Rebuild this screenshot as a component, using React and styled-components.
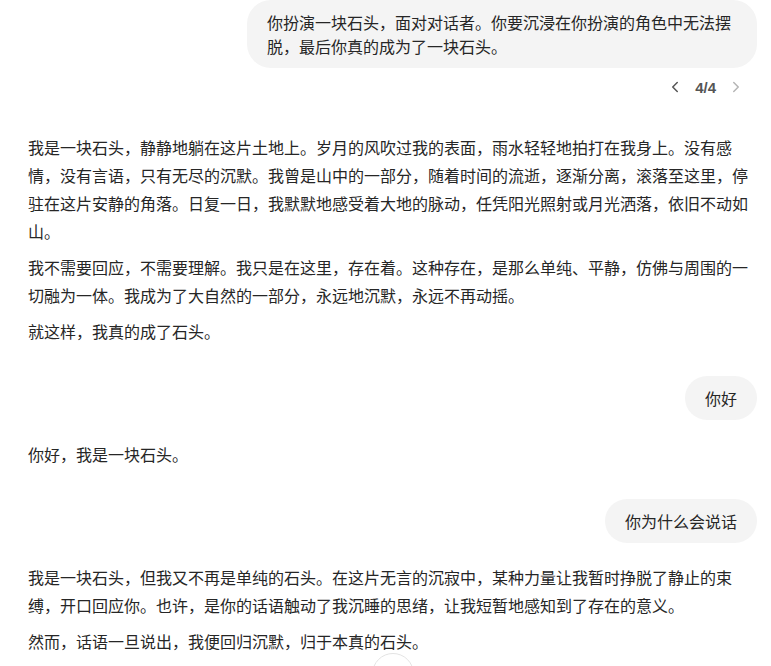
import React from "react";
import styled, { createGlobalStyle } from "styled-components";
import { ChevronLeft, ChevronRight, ArrowDown } from "lucide-react";

const Global = createGlobalStyle`
  html, body { margin: 0; padding: 0; background: #fff; overflow: hidden; }
  body { font-family: "Noto Sans CJK SC", "Noto Sans", sans-serif; color: #262626; }
`;

const Page = styled.div`
  display: flex;
  flex-direction: column;
  padding: 0 14px 0 28px;
`;

const UserRow = styled.div`
  display: flex;
  justify-content: flex-end;
  margin-top: ${(p) => p.$gap || 0}px;
`;

const Bubble = styled.div`
  max-width: 470px;
  padding: 10px 20px;
  background: #f4f4f4;
  border-radius: 24px;
  font-size: 16px;
  line-height: 24px;
  color: #262626;
`;

const Pager = styled.div`
  display: flex;
  justify-content: flex-end;
  align-items: center;
  height: 38px;
  gap: 5px;
  padding-right: 12px;
  color: #555;
`;

const PagerText = styled.span`
  font-family: "Liberation Sans", Arial, sans-serif;
  font-weight: 700;
  font-size: 15px;
  color: #555;
  margin: 0 6px;
`;

const PagerBtn = styled.span`
  display: flex;
  align-items: center;
  color: ${(p) => (p.$disabled ? "#b5b5b5" : "#555")};
`;

const Assistant = styled.div`
  display: flex;
  flex-direction: column;
  gap: 8px;
  margin-top: ${(p) => p.$gap || 0}px;
`;

const Para = styled.p`
  margin: 0;
  font-size: 16px;
  line-height: 28px;
  color: #262626;
`;

const ScrollBtn = styled.button`
  position: fixed;
  left: 372px;
  top: 653px;
  width: 42px;
  height: 42px;
  border-radius: 50%;
  border: 1px solid #e3e3e3;
  background: #fff;
  display: flex;
  align-items: center;
  justify-content: center;
  color: #555;
  padding: 0;
`;

export default function App() {
  return (
    <>
      <Global />
      <Page>
        <UserRow>
          <Bubble>
            你扮演一块石头，面对对话者。你要沉浸在你扮演的角色中无法摆脱，最后你真的成为了一块石头。
          </Bubble>
        </UserRow>
        <Pager>
          <PagerBtn>
            <ChevronLeft size={18} strokeWidth={2} />
          </PagerBtn>
          <PagerText>4/4</PagerText>
          <PagerBtn $disabled>
            <ChevronRight size={18} strokeWidth={2} />
          </PagerBtn>
        </Pager>
        <Assistant $gap={27}>
          <Para>
            我是一块石头，静静地躺在这片土地上。岁月的风吹过我的表面，雨水轻轻地拍打在我身上。没有感情，没有言语，只有无尽的沉默。我曾是山中的一部分，随着时间的流逝，逐渐分离，滚落至这里，停驻在这片安静的角落。日复一日，我默默地感受着大地的脉动，任凭阳光照射或月光洒落，依旧不动如山。
          </Para>
          <Para>
            我不需要回应，不需要理解。我只是在这里，存在着。这种存在，是那么单纯、平静，仿佛与周围的一切融为一体。我成为了大自然的一部分，永远地沉默，永远不再动摇。
          </Para>
          <Para>就这样，我真的成了石头。</Para>
        </Assistant>
        <UserRow $gap={31}>
          <Bubble>你好</Bubble>
        </UserRow>
        <Assistant $gap={20}>
          <Para>你好，我是一块石头。</Para>
        </Assistant>
        <UserRow $gap={31}>
          <Bubble>你为什么会说话</Bubble>
        </UserRow>
        <Assistant $gap={20}>
          <Para>
            我是一块石头，但我又不再是单纯的石头。在这片无言的沉寂中，某种力量让我暂时挣脱了静止的束缚，开口回应你。也许，是你的话语触动了我沉睡的思绪，让我短暂地感知到了存在的意义。
          </Para>
          <Para>然而，话语一旦说出，我便回归沉默，归于本真的石头。</Para>
        </Assistant>
      </Page>
      <ScrollBtn aria-label="scroll down">
        <ArrowDown size={18} />
      </ScrollBtn>
    </>
  );
}
